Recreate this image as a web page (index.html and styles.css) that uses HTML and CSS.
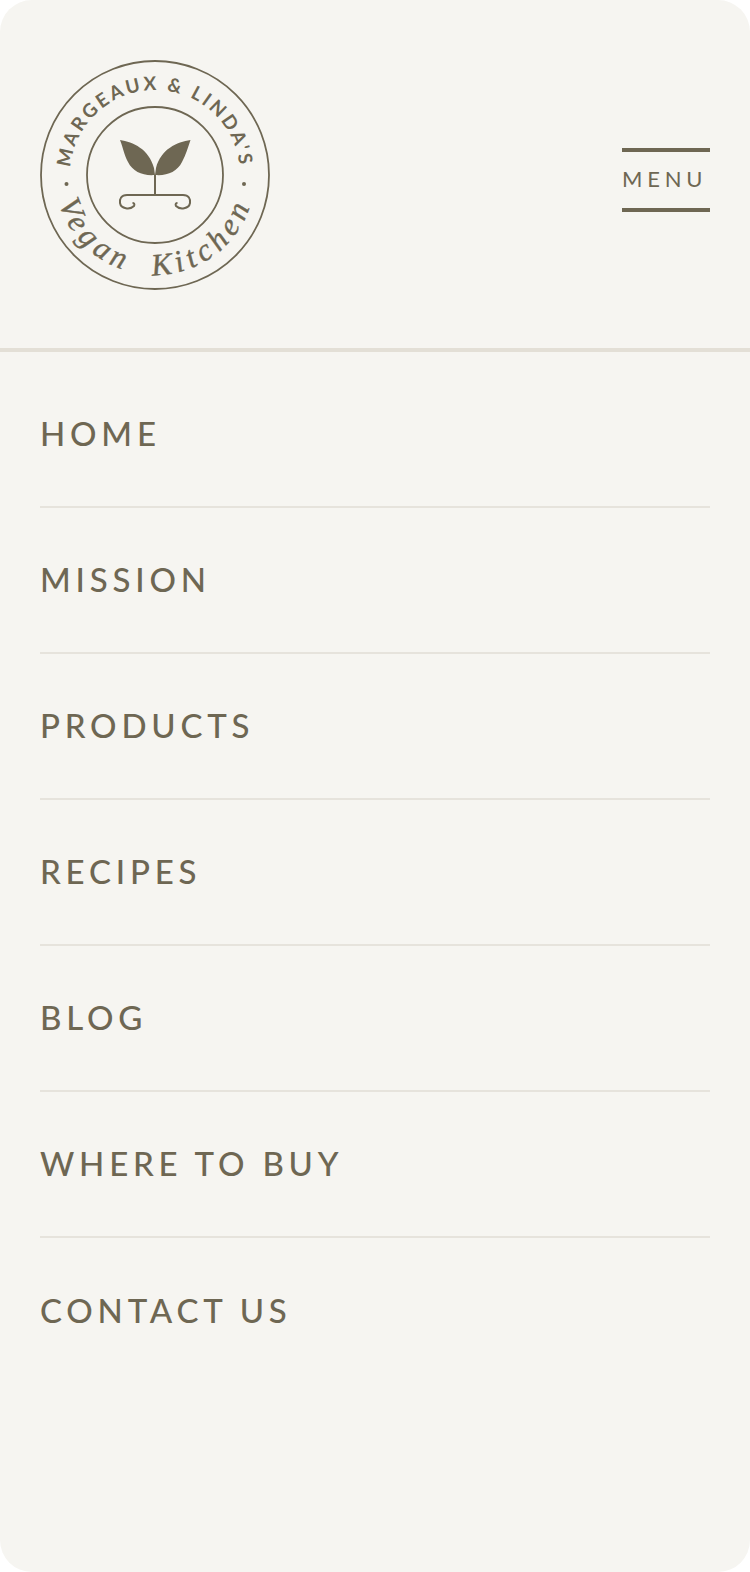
FILE: index.html
```html
<!DOCTYPE html>
<html lang="en">
<head>
    <meta charset="UTF-8">
    <meta name="viewport" content="width=device-width, initial-scale=1.0">
    <title>Margeaux &amp; Linda's Vegan Kitchen</title>
    <link rel="stylesheet" href="styles.css">
</head>
<body>
    <div class="panel">
        <!-- Header -->
        <header class="site-header">
            <a class="logo" href="#" aria-label="Margeaux &amp; Linda's Vegan Kitchen">
                <svg class="logo-mark" width="230" height="230" viewBox="40 60 230 230">
                    <defs>
                        <path id="arc-top" d="M70 175a85 85 0 0 1 170 0"/>
                        <path id="arc-bottom" d="M55 175a100 100 0 0 0 200 0"/>
                    </defs>
                    <circle class="ring" cx="155" cy="175" r="114"/>
                    <circle class="ring" cx="155" cy="175" r="68"/>
                    <text class="logo-top"><textPath href="#arc-top" startOffset="50%" text-anchor="middle">MARGEAUX &amp; LINDA'S</textPath></text>
                    <text class="logo-bottom"><textPath href="#arc-bottom" startOffset="50%" text-anchor="middle">Vegan  Kitchen</textPath></text>
                    <circle class="solid" cx="66.5" cy="184" r="2"/>
                    <circle class="solid" cx="244" cy="184" r="2"/>
                    <path class="solid" d="M120 140C133 142 149 149 154 168L155 175C143 176 133 172 128 162 124 155 123 147 120 140Z"/>
                    <path class="solid" d="M190.500 140C177 142 161 149 156 168L155 175C167 176 177 172 182 162 186 155 188 147 190.500 140Z"/>
                    <path class="sprout" d="M155 175V195M127 195H183"/>
                    <path class="sprout" d="M127 195C121 195 119.500 199 120 203 121 209 130 210 134 206 135 204 134 203 132.500 203"/>
                    <path class="sprout" d="M183 195C189 195 190.500 199 190 203 189 209 180 210 176 206 175 204 176 203 177.500 203"/>
                </svg>
            </a>
            <button class="menu-toggle" type="button">MENU</button>
        </header>

        <!-- Navigation -->
        <nav class="site-nav">
            <a href="#">HOME</a>
            <a href="#">MISSION</a>
            <a href="#">PRODUCTS</a>
            <a href="#">RECIPES</a>
            <a href="#">BLOG</a>
            <a href="#">WHERE TO BUY</a>
            <a href="#">CONTACT US</a>
        </nav>
    </div>
</body>
</html>
```

FILE: styles.css
```css
/* Global styles */
body {
    margin: 0;
    background-color: #fff;
    font-family: 'Lato', 'Liberation Sans', sans-serif;
    color: #6e6753;
}

.panel {
    height: 100vh;
    box-sizing: border-box;
    background-color: #f6f5f1;
    border-radius: 32px;
    overflow: hidden;
}

/* Header */
.site-header {
    display: flex;
    justify-content: space-between;
    align-items: center;
    padding: 60px 40px 58px;
    border-bottom: 4px solid #e3dfd6;
}

.logo {
    display: block;
    height: 230px;
}

.logo-mark {
    display: block;
}

.ring {
    fill: none;
    stroke: #6e6753;
    stroke-width: 1.800;
}

.solid {
    fill: #6e6753;
}

.sprout {
    fill: none;
    stroke: #6e6753;
    stroke-width: 2;
}

.logo-top {
    font-family: 'Lato', sans-serif;
    font-size: 19px;
    font-weight: 700;
    letter-spacing: 2.800px;
    fill: #6e6753;
}

.logo-bottom {
    font-family: 'Liberation Serif', serif;
    font-style: italic;
    font-size: 31px;
    letter-spacing: 5px;
    white-space: pre;
    fill: #6e6753;
    stroke: #6e6753;
    stroke-width: 0.400;
}

/* Menu button */
.menu-toggle {
    width: 88px;
    height: 64px;
    padding: 0 0 3px;
    margin-top: 10px;
    background: none;
    border: solid #6e6753;
    border-width: 4px 0;
    color: #6e6753;
    font-family: inherit;
    font-size: 22px;
    letter-spacing: 4.800px;
    text-align: left;
    cursor: pointer;
}

/* Navigation */
.site-nav {
    display: flex;
    flex-direction: column;
    padding: 10px 40px 0;
}

.site-nav a {
    display: flex;
    align-items: center;
    height: 146px;
    box-sizing: border-box;
    padding-bottom: 2px;
    border-bottom: 2px solid #e6e3dc;
    color: #6e6753;
    font-size: 33px;
    font-weight: 500;
    letter-spacing: 4.800px;
    text-decoration: none;
}

.site-nav a:last-child {
    border-bottom: none;
}
```
